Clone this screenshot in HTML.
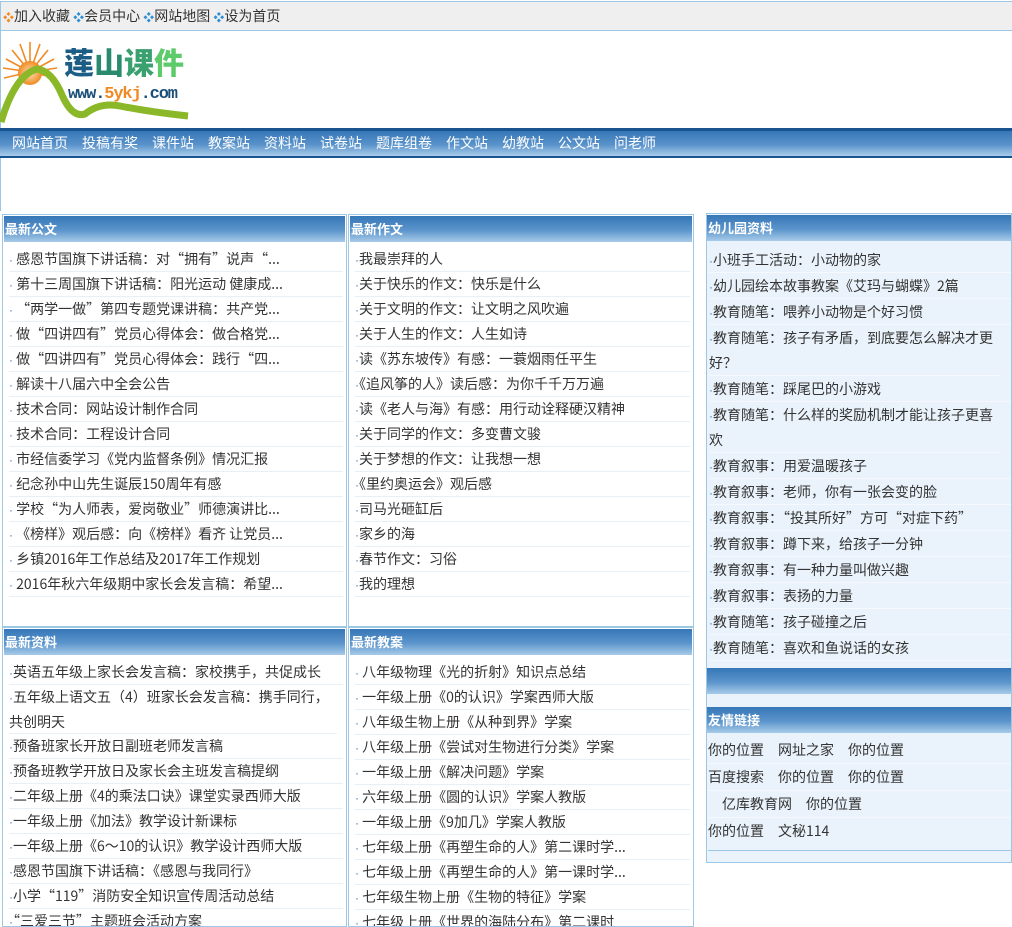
<!DOCTYPE html>
<html><head><meta charset="utf-8"><style>
*{margin:0;padding:0;box-sizing:border-box}
body{width:1012px;height:920px;overflow:hidden;background:#fff;font-family:"Noto Sans CJK SC","Liberation Sans",sans-serif;font-size:14px;color:#333;position:relative}
.a{position:absolute}
.top{left:0;top:1px;width:1012px;height:30px;background:#efefef;border:1px solid #9cc8e6;border-right:none;padding:0 0 0 2px;line-height:28px;font-size:14px;color:#333}
.top span{font-size:11px}
.lb{left:0;top:31px;width:1px;height:180px;background:#9cc8e6}
.nav{left:0;top:128px;width:1012px;height:30px;border-top:3px solid #1a5490;border-bottom:2px solid #1a5490;background:linear-gradient(#3677b7,#5a93cb 55%,#a9cbea);color:#fff;padding:0 0 0 12px;line-height:25px;font-size:14px;white-space:nowrap}
.nav b{font-weight:normal;margin-right:14px}
.box{border:1px solid #9cc8e6;background:#fff;overflow:hidden}
.hd{height:26px;background:linear-gradient(#3677b7,#5c95cc 55%,#a8cbe9);color:#fff;font-weight:bold;font-size:13px;line-height:26px;padding-left:1px;margin:1px}
ul{list-style:none;padding:4px 3px 0 6px}
li{line-height:24px;height:25px;border-bottom:1px solid #e6f0f8;overflow:hidden;white-space:nowrap}
li.w{height:49px;white-space:normal;margin-right:6px}
li i{font-style:normal;color:#3677b7;font-family:"Liberation Sans",sans-serif;font-size:12px}
.r{background:#eaf3fb}
.r li{line-height:24px;height:26px;padding:1px 0;border-bottom:1px solid #f5f9fd}
.r li.w{height:51px;margin-right:10px}
</style></head><body>
<div class="a top"><span style="color:#f08a24">❖</span>加入收藏 <span style="color:#2b8fd6">❖</span>会员中心 <span style="color:#2b8fd6">❖</span>网站地图 <span style="color:#2b8fd6">❖</span>设为首页</div>
<div class="a lb"></div>
<svg class="a" style="left:0;top:30px" width="200" height="100" viewBox="0 0 200 100">
<defs><radialGradient id="s"><stop offset="0" stop-color="#fde0b0"/><stop offset="1" stop-color="#f08a24"/></radialGradient></defs>
<g stroke="#f08a24" stroke-width="1.6">
<line x1="30" y1="42" x2="30" y2="12"/><line x1="30" y1="42" x2="20" y2="14"/><line x1="30" y1="42" x2="40" y2="14"/><line x1="30" y1="42" x2="12" y2="20"/><line x1="30" y1="42" x2="48" y2="20"/><line x1="30" y1="42" x2="6" y2="29"/><line x1="30" y1="42" x2="54" y2="29"/><line x1="30" y1="42" x2="3" y2="38"/><line x1="30" y1="42" x2="57" y2="38"/><line x1="30" y1="42" x2="4" y2="48"/><line x1="30" y1="42" x2="56" y2="48"/></g>
<circle cx="30" cy="43" r="12" fill="url(#s)"/>
<path d="M1 92 Q15 45 37 39 Q52 41 62 65 Q72 88 85 84 Q100 72 120 76 Q150 82 188 86" fill="none" stroke="#8ab828" stroke-width="7"/>
<text x="64" y="44" font-family="Noto Sans CJK SC,sans-serif" font-weight="900" font-size="30" fill="#1b5d84">莲<tspan fill="#2a8a6e">山</tspan><tspan fill="#3aa070">课</tspan><tspan fill="#5ecb6a">件</tspan></text>
<text x="68" y="68" font-family="Liberation Mono,monospace" font-weight="bold" font-size="17" textLength="110" fill="#1b4f7a">www.<tspan fill="#f08a24">5ykj</tspan>.com</text>
</svg>
<div class="a nav"><b>网站首页</b><b>投稿有奖</b><b>课件站</b><b>教案站</b><b>资料站</b><b>试卷站</b><b>题库组卷</b><b>作文站</b><b>幼教站</b><b>公文站</b><b>问老师</b></div>

<div class="a box" style="left:2px;top:214px;width:345px;height:413px"><div class="hd">最新公文</div><ul>
<li><i>·</i> 感恩节国旗下讲话稿：对“拥有”说声“...</li><li><i>·</i> 第十三周国旗下讲话稿：阳光运动 健康成...</li><li><i>·</i> “两学一做”第四专题党课讲稿：共产党...</li><li><i>·</i> 做“四讲四有”党员心得体会：做合格党...</li><li><i>·</i> 做“四讲四有”党员心得体会：践行“四...</li><li><i>·</i> 解读十八届六中全会公告</li><li><i>·</i> 技术合同：网站设计制作合同</li><li><i>·</i> 技术合同：工程设计合同</li><li><i>·</i> 市经信委学习《党内监督条例》情况汇报</li><li><i>·</i> 纪念孙中山先生诞辰150周年有感</li><li><i>·</i> 学校“为人师表，爱岗敬业”师德演讲比...</li><li><i>·</i> 《榜样》观后感：向《榜样》看齐 让党员...</li><li><i>·</i> 乡镇2016年工作总结及2017年工作规划</li><li><i>·</i> 2016年秋六年级期中家长会发言稿：希望...</li></ul></div>

<div class="a box" style="left:348px;top:214px;width:346px;height:413px"><div class="hd">最新作文</div><ul>
<li><i>·</i>我最崇拜的人</li><li><i>·</i>关于快乐的作文：快乐是什么</li><li><i>·</i>关于文明的作文：让文明之风吹遍</li><li><i>·</i>关于人生的作文：人生如诗</li><li><i>·</i>读《苏东坡传》有感：一蓑烟雨任平生</li><li><i>·</i>《追风筝的人》读后感：为你千千万万遍</li><li><i>·</i>读《老人与海》有感：用行动诠释硬汉精神</li><li><i>·</i>关于同学的作文：多变曹文骏</li><li><i>·</i>关于梦想的作文：让我想一想</li><li><i>·</i>《里约奥运会》观后感</li><li><i>·</i>司马光砸缸后</li><li><i>·</i>家乡的海</li><li><i>·</i>春节作文：习俗</li><li><i>·</i>我的理想</li></ul></div>

<div class="a box" style="left:2px;top:627px;width:345px;height:300px"><div class="hd">最新资料</div><ul>
<li><i>·</i>英语五年级上家长会发言稿：家校携手，共促成长</li><li class="w"><i>·</i>五年级上语文五（4）班家长会发言稿：携手同行，共创明天</li><li><i>·</i>预备班家长开放日副班老师发言稿</li><li><i>·</i>预备班教学开放日及家长会主班发言稿提纲</li><li><i>·</i>二年级上册《4的乘法口诀》课堂实录西师大版</li><li><i>·</i>一年级上册《加法》教学设计新课标</li><li><i>·</i>一年级上册《6～10的认识》教学设计西师大版</li><li><i>·</i>感恩节国旗下讲话稿：《感恩与我同行》</li><li><i>·</i>小学“119”消防安全知识宣传周活动总结</li><li><i>·</i>“三爱三节”主题班会活动方案</li></ul></div>

<div class="a box" style="left:348px;top:627px;width:346px;height:300px"><div class="hd">最新教案</div><ul>
<li><i>·</i> 八年级物理《光的折射》知识点总结</li><li><i>·</i> 一年级上册《0的认识》学案西师大版</li><li><i>·</i> 八年级生物上册《从种到界》学案</li><li><i>·</i> 八年级上册《尝试对生物进行分类》学案</li><li><i>·</i> 一年级上册《解决问题》学案</li><li><i>·</i> 六年级上册《圆的认识》学案人教版</li><li><i>·</i> 一年级上册《9加几》学案人教版</li><li><i>·</i> 七年级上册《再塑生命的人》第二课时学...</li><li><i>·</i> 七年级上册《再塑生命的人》第一课时学...</li><li><i>·</i> 七年级生物上册《生物的特征》学案</li><li><i>·</i> 七年级上册《世界的海陆分布》第二课时</li></ul></div>

<div class="a box r" style="left:706px;top:213px;width:306px;height:650px">
<div class="hd" style="margin:1px 0">幼儿园资料</div><ul style="padding:5px 0 0 2px">
<li><i>·</i>小班手工活动：小动物的家</li><li><i>·</i>幼儿园绘本故事教案《艾玛与蝴蝶》2篇</li><li><i>·</i>教育随笔：喂养小动物是个好习惯</li><li class="w"><i>·</i>教育随笔：孩子有矛盾，到底要怎么解决才更好？</li><li><i>·</i>教育随笔：踩尾巴的小游戏</li><li class="w"><i>·</i>教育随笔：什么样的奖励机制才能让孩子更喜欢</li><li><i>·</i>教育叙事：用爱温暖孩子</li><li><i>·</i>教育叙事：老师，你有一张会变的脸</li><li><i>·</i>教育叙事：“投其所好”方可“对症下药”</li><li><i>·</i>教育叙事：蹲下来，给孩子一分钟</li><li><i>·</i>教育叙事：有一种力量叫做兴趣</li><li><i>·</i>教育叙事：表扬的力量</li><li><i>·</i>教育随笔：孩子碰撞之后</li><li><i>·</i>教育随笔：喜欢和鱼说话的女孩</li></ul>
<div class="a hd" style="left:0;top:454px;width:304px;margin:0"></div>
<div class="a hd" style="left:0;top:493px;width:304px;margin:0">友情链接</div>
<div class="a" style="left:1px;top:523px;width:303px;line-height:26px">
<div style="border-bottom:1px solid #f5f9fd">你的位置　网址之家　你的位置</div>
<div style="border-bottom:1px solid #f5f9fd">百度搜索　你的位置　你的位置</div>
<div style="border-bottom:1px solid #f5f9fd">　亿库教育网　你的位置</div>
<div style="border-bottom:1px solid #9cc8e6;height:33px">你的位置　文秘114</div></div>
</div>
</body></html>
